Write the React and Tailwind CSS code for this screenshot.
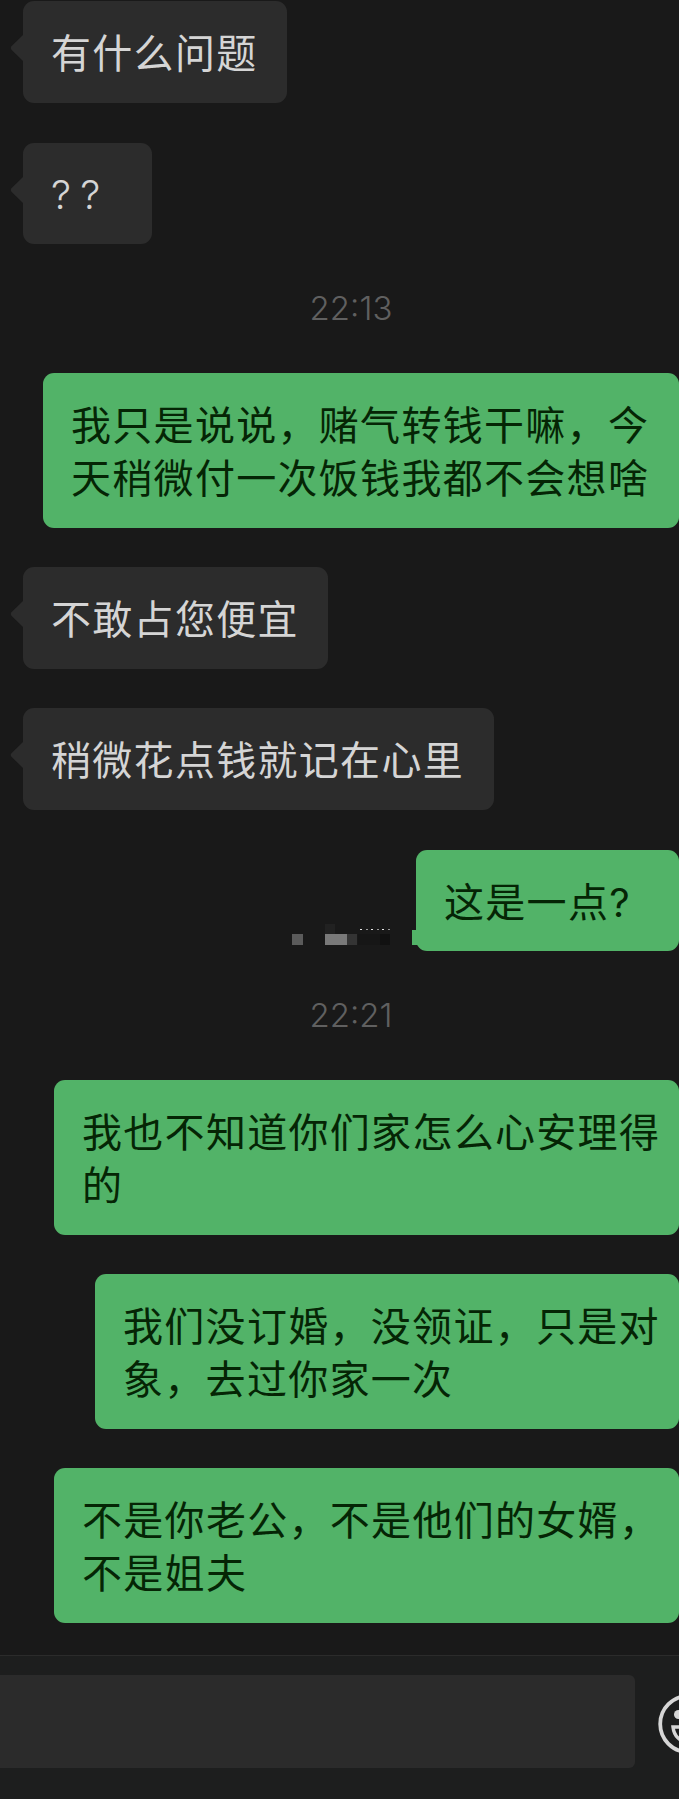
import React from 'react';
import clsx from 'clsx';

const MESSAGES = [
  { from: 'them', lines: ['有什么问题'], box: 'mt-px w-[264px]' },
  { from: 'them', lines: ['??'], box: 'mt-10 w-[129px]', pad: 'pt-[25px] pb-[23px]', text: 'tracking-[9.2px] font-[360]' },
  { time: '22:13' },
  { from: 'me', lines: ['我只是说说，赌气转钱干嘛，今', '天稍微付一次饭钱我都不会想啥'], box: 'w-[636px]' },
  { from: 'them', lines: ['不敢占您便宜'], box: 'mt-[39px] w-[305px]' },
  { from: 'them', lines: ['稍微花点钱就记在心里'], box: 'mt-[39px] w-[471px]' },
  { from: 'me', lines: ['这是一点?'], box: 'mt-10 w-[263px]', pad: 'pt-[26px] pb-[22px]', smudge: true },
  { time: '22:21' },
  { from: 'me', lines: ['我也不知道你们家怎么心安理得', '的'], box: 'w-[625px]' },
  { from: 'me', lines: ['我们没订婚，没领证，只是对', '象，去过你家一次'], box: 'mt-[39px] w-[584px]' },
  { from: 'me', lines: ['不是你老公，不是他们的女婿，', '不是姐夫'], box: 'mt-[39px] w-[625px]' },
];

// Pixelated strip left of the bubble, 124px wide
function Smudge() {
  return (
    <svg className="absolute -left-[124px] top-[73px]" width="130" height="24" shapeRendering="crispEdges">
      <rect x="0" y="11" width="11" height="11" fill="#5b5b5b" />
      <rect x="33" y="1" width="10" height="10" fill="#212121" />
      <rect x="33" y="11" width="22" height="11" fill="#797979" />
      <rect x="55" y="11" width="10" height="11" fill="#343434" />
      <rect x="66" y="11" width="22" height="11" fill="#161616" />
      <rect x="88" y="11" width="10" height="11" fill="#111111" />
      {[68, 74, 79, 85, 90, 96].map((x, i) => (
        <rect key={x} x={x} y="6" width="2" height="1" fill={i % 2 ? '#999999' : '#e8e8e8'} />
      ))}
      <rect x="120" y="7" width="10" height="15" fill="#52b368" />
    </svg>
  );
}

function Bubble({ msg }) {
  const mine = msg.from === 'me';
  return (
    <div
      className={clsx(
        'relative shrink-0 rounded-[11px] pl-7 text-[40px] leading-[53px] whitespace-nowrap',
        mine ? 'self-end bg-[#52b368] text-[#052505]' : 'self-start ml-[23px] bg-[#2c2c2c] text-[#d5d5d5]',
        msg.pad || 'pt-[26px] pb-[23px]',
        msg.text || 'tracking-[1.3px] font-[380]',
        msg.box
      )}
    >
      {!mine && (
        <svg className="absolute -left-[13px] top-[33px]" width="14" height="28" viewBox="0 0 14 28">
          <path d="M14 0 L1.5 12.3 Q0 14 1.5 15.7 L14 28 Z" fill="#2c2c2c" />
        </svg>
      )}
      {msg.smudge && <Smudge />}
      {msg.lines.map((line) => (
        <p key={line}>{line}</p>
      ))}
    </div>
  );
}

function TimeLabel({ children }) {
  return (
    <div className="h-[129px] shrink-0 pl-[23px] pt-11 text-center text-[33px] leading-[40px] font-[360] text-[#606060]">
      {children}
    </div>
  );
}

function InputBar() {
  return (
    <div className="flex h-[144px] shrink-0 items-start border-t border-[#2b2b2b] bg-[#1d1e1e] pt-[19px]">
      <div className="h-[93px] w-[635px] shrink-0 rounded-r-md bg-[#2b2b2b]" />
      <svg className="ml-[23px] mt-[19px] shrink-0" width="60" height="60" viewBox="0 0 60 60" fill="none">
        <circle cx="30.2" cy="30" r="28" stroke="#d6d6d6" strokeWidth="3.8" />
        <circle cx="20.5" cy="20.5" r="4.5" fill="#d6d6d6" />
        <circle cx="39.5" cy="20.5" r="4.5" fill="#d6d6d6" />
        <path d="M15 33 H45 C44 42 38 48 30 48 C22 48 16 42 15 33 Z" stroke="#d6d6d6" strokeWidth="3.4" />
      </svg>
    </div>
  );
}

export default function App() {
  return (
    <div className="flex h-[1799px] w-[679px] flex-col overflow-hidden bg-[#191919] font-[Inter,'Noto_Sans_CJK_SC',sans-serif]">
      <div className="flex flex-1 flex-col">
        {MESSAGES.map((msg, i) =>
          msg.time ? <TimeLabel key={i}>{msg.time}</TimeLabel> : <Bubble key={i} msg={msg} />
        )}
      </div>
      <InputBar />
    </div>
  );
}
